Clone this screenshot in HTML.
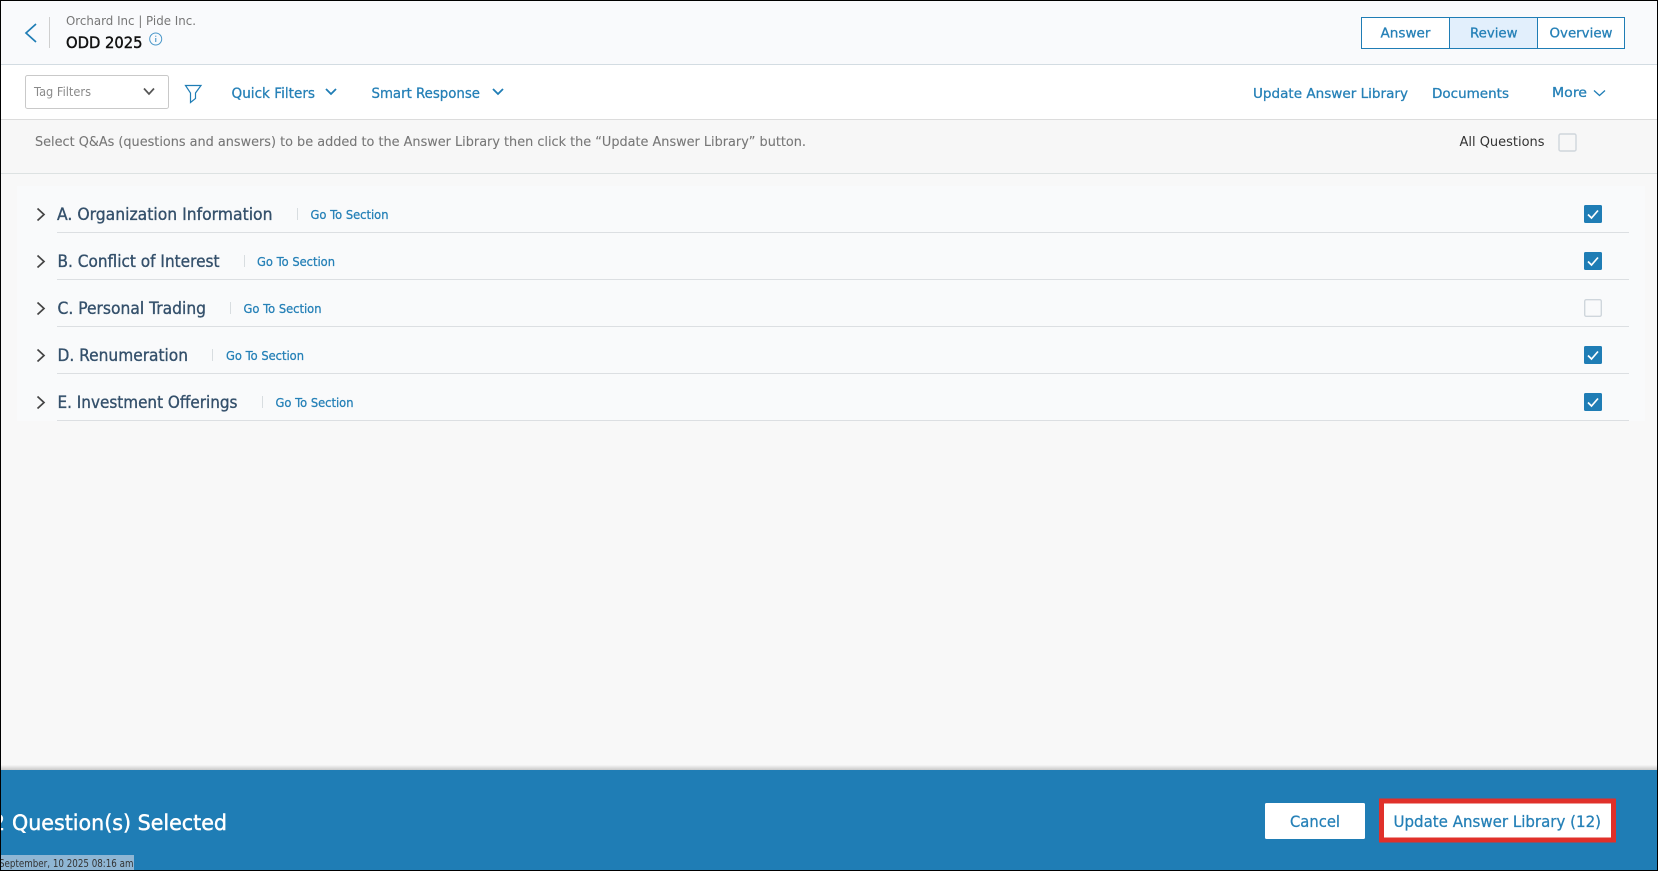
<!DOCTYPE html>
<html lang="en">
<head>
<meta charset="utf-8">
<title>ODD 2025</title>
<style>
html,body{margin:0;padding:0;width:1658px;height:871px;overflow:hidden;background:#000}
svg{display:block}
text{font-family:"DejaVu Sans","Liberation Sans",sans-serif}
.b{fill:#2580b7;stroke:#2580b7;stroke-width:.28px}
.semi{stroke:currentColor;stroke-width:.45px}
.t{fill:#34506b;stroke:#34506b;stroke-width:.35px}
</style>
</head>
<body>
<svg width="1658" height="871" viewBox="0 0 1658 871" xmlns="http://www.w3.org/2000/svg">
<defs>
<linearGradient id="sh" x1="0" y1="0" x2="0" y2="1"><stop offset="0" stop-color="#f7f7f7"/><stop offset="1" stop-color="#c9c9c9"/></linearGradient>
</defs>
<!-- frame -->
<rect width="1658" height="871" fill="#000"/>
<rect x="1" y="1" width="1656" height="869" fill="#f8f8f8"/>

<!-- header -->
<rect x="1" y="1" width="1656" height="63" fill="#f9fafc"/>
<rect x="1" y="64" width="1656" height="1" fill="#d3dce2"/>
<path d="M36 24 L26 33 L36 42" fill="none" stroke="#1f7db5" stroke-width="1.7"/>
<rect x="49" y="17" width="1" height="31" fill="#cfcfcf"/>
<text x="66" y="25" font-size="12" fill="#777" textLength="130" lengthAdjust="spacingAndGlyphs">Orchard Inc | Pide Inc.</text>
<text x="66" y="48" font-size="16" fill="#111" color="#111" class="semi" textLength="76.500" lengthAdjust="spacingAndGlyphs">ODD 2025</text>
<circle cx="155.700" cy="39" r="6" fill="none" stroke="#4a97c9" stroke-width="1"/>
<rect x="155.200" y="38" width="1.100" height="4" fill="#4a97c9"/>
<rect x="155.200" y="35.700" width="1.100" height="1.100" fill="#4a97c9"/>

<!-- tabs -->
<rect x="1361.500" y="17.500" width="263" height="31" fill="#fff" stroke="#1f7db5"/>
<rect x="1450" y="18" width="87" height="30" fill="#e2effc"/>
<rect x="1449" y="17" width="1" height="32" fill="#1f7db5"/>
<rect x="1537" y="17" width="1" height="32" fill="#1f7db5"/>
<text x="1380.500" y="37.500" font-size="13.500" class="b" textLength="50" lengthAdjust="spacingAndGlyphs">Answer</text>
<text x="1470" y="37.500" font-size="13.500" class="b" textLength="47.500" lengthAdjust="spacingAndGlyphs">Review</text>
<text x="1549.500" y="37.500" font-size="13.500" class="b" textLength="63" lengthAdjust="spacingAndGlyphs">Overview</text>

<!-- toolbar -->
<rect x="1" y="65" width="1656" height="54" fill="#fff"/>
<rect x="1" y="119" width="1656" height="1" fill="#dcdcdc"/>
<rect x="25.500" y="75.500" width="143" height="33" rx="2" fill="#fff" stroke="#c9c9c9"/>
<text x="34" y="96" font-size="12.500" fill="#8a8a8a" textLength="57" lengthAdjust="spacingAndGlyphs">Tag Filters</text>
<path d="M144 88.500 L149 94 L154 88.500" fill="none" stroke="#555" stroke-width="1.700"/>
<path d="M185.500 85.500 H201 L195.500 93 V98.500 L190.500 102.500 V93 Z" fill="none" stroke="#1f7db5" stroke-width="1.200"/>
<text x="231.500" y="98" font-size="14" class="b" textLength="83.500" lengthAdjust="spacingAndGlyphs">Quick Filters</text>
<path d="M326 89 L331 94 L336 89" fill="none" stroke="#1f7db5" stroke-width="1.800"/>
<text x="371.500" y="98" font-size="14" class="b" textLength="108.500" lengthAdjust="spacingAndGlyphs">Smart Response</text>
<path d="M493 89 L498 94 L503 89" fill="none" stroke="#1f7db5" stroke-width="1.800"/>
<text x="1253" y="98" font-size="13.500" class="b" textLength="155" lengthAdjust="spacingAndGlyphs">Update Answer Library</text>
<text x="1432" y="98" font-size="13.500" class="b" textLength="77" lengthAdjust="spacingAndGlyphs">Documents</text>
<text x="1552" y="97" font-size="13.500" class="b" textLength="35" lengthAdjust="spacingAndGlyphs">More</text>
<path d="M1594 90.500 L1599.500 95.500 L1605 90.500" fill="none" stroke="#1f7db5" stroke-width="1.300"/>

<!-- instruction bar -->
<rect x="1" y="120" width="1656" height="53" fill="#f7f7f7"/>
<rect x="1" y="173" width="1656" height="1" fill="#dde2e2"/>
<text x="35" y="146" font-size="13" fill="#777" stroke="#777" stroke-width=".1" textLength="771" lengthAdjust="spacingAndGlyphs">Select Q&amp;As (questions and answers) to be added to the Answer Library then click the “Update Answer Library” button.</text>
<text x="1459.500" y="146" font-size="13" fill="#333" textLength="85" lengthAdjust="spacingAndGlyphs">All Questions</text>
<rect x="1559" y="134" width="17" height="17" rx="1.500" fill="#f7f7f7" stroke="#cfd6dc" stroke-width="1.400"/>

<!-- sections -->
<rect x="17" y="186" width="1628" height="235" fill="#f9fafb"/>

<g fill="none" stroke="#444" stroke-width="1.700">
<path d="M37.500 208.500 L44 214.500 L37.500 220.500"/>
<path d="M37.500 255.500 L44 261.500 L37.500 267.500"/>
<path d="M37.500 302.500 L44 308.500 L37.500 314.500"/>
<path d="M37.500 349.500 L44 355.500 L37.500 361.500"/>
<path d="M37.500 396.500 L44 402.500 L37.500 408.500"/>
</g>

<g font-size="16.500" class="t">
<text x="57" y="220" textLength="215.500" lengthAdjust="spacingAndGlyphs">A. Organization Information</text>
<text x="57.500" y="267" textLength="162" lengthAdjust="spacingAndGlyphs">B. Conflict of Interest</text>
<text x="57.500" y="314" textLength="148.500" lengthAdjust="spacingAndGlyphs">C. Personal Trading</text>
<text x="57.500" y="361" textLength="130.500" lengthAdjust="spacingAndGlyphs">D. Renumeration</text>
<text x="57.500" y="408" textLength="180" lengthAdjust="spacingAndGlyphs">E. Investment Offerings</text>
</g>

<g fill="#d8dde0">
<rect x="297" y="208" width="1" height="12"/>
<rect x="244" y="255" width="1" height="12"/>
<rect x="230" y="302" width="1" height="12"/>
<rect x="212" y="349" width="1" height="12"/>
<rect x="262" y="396" width="1" height="12"/>
</g>

<g font-size="12.500" class="b">
<text x="310.500" y="219" textLength="78" lengthAdjust="spacingAndGlyphs">Go To Section</text>
<text x="257" y="266" textLength="78" lengthAdjust="spacingAndGlyphs">Go To Section</text>
<text x="243.500" y="313" textLength="78" lengthAdjust="spacingAndGlyphs">Go To Section</text>
<text x="226" y="360" textLength="78" lengthAdjust="spacingAndGlyphs">Go To Section</text>
<text x="275.500" y="407" textLength="78" lengthAdjust="spacingAndGlyphs">Go To Section</text>
</g>

<g fill="#dcdfe2">
<rect x="57" y="232" width="1572" height="1"/>
<rect x="57" y="279" width="1572" height="1"/>
<rect x="57" y="326" width="1572" height="1"/>
<rect x="57" y="373" width="1572" height="1"/>
<rect x="57" y="420" width="1572" height="1"/>
</g>

<g fill="#1f7db5">
<rect x="1584" y="205" width="18" height="18" rx="1.500"/>
<rect x="1584" y="252" width="18" height="18" rx="1.500"/>
<rect x="1584" y="346" width="18" height="18" rx="1.500"/>
<rect x="1584" y="393" width="18" height="18" rx="1.500"/>
</g>
<rect x="1584.700" y="299.700" width="16.600" height="16.600" rx="1.500" fill="#f9fafb" stroke="#cfd6dc" stroke-width="1.400"/>
<g fill="none" stroke="#fff" stroke-width="1.700">
<path d="M1588 214.500 L1591.500 218 L1598 210.500"/>
<path d="M1588 261.500 L1591.500 265 L1598 257.500"/>
<path d="M1588 355.500 L1591.500 359 L1598 351.500"/>
<path d="M1588 402.500 L1591.500 406 L1598 398.500"/>
</g>

<!-- footer -->
<rect x="1" y="765" width="1656" height="5" fill="url(#sh)"/>
<rect x="1" y="770" width="1656" height="100" fill="#1f7db5"/>
<text x="-8" y="830" font-size="21" fill="#fff" color="#fff" class="semi" textLength="13" lengthAdjust="spacingAndGlyphs">2</text>
<text x="12" y="830" font-size="21" fill="#fff" color="#fff" class="semi" textLength="215" lengthAdjust="spacingAndGlyphs">Question(s) Selected</text>
<rect x="1" y="855" width="133" height="15" fill="#8fb6d4"/>
<text x="-1" y="867" font-size="10.500" fill="#333" textLength="134.500" lengthAdjust="spacingAndGlyphs">September, 10 2025 08:16 am</text>
<rect x="0" y="770" width="1" height="101" fill="#000"/>

<rect x="1265" y="803" width="100" height="36" rx="1.500" fill="#fff"/>
<text x="1290" y="827" font-size="16" class="b" textLength="50" lengthAdjust="spacingAndGlyphs">Cancel</text>
<rect x="1381.500" y="801" width="232" height="39" fill="#fff" stroke="#e0302a" stroke-width="5"/>
<text x="1393.500" y="827" font-size="16" class="b" textLength="207.500" lengthAdjust="spacingAndGlyphs">Update Answer Library (12)</text>
</svg>
</body>
</html>
